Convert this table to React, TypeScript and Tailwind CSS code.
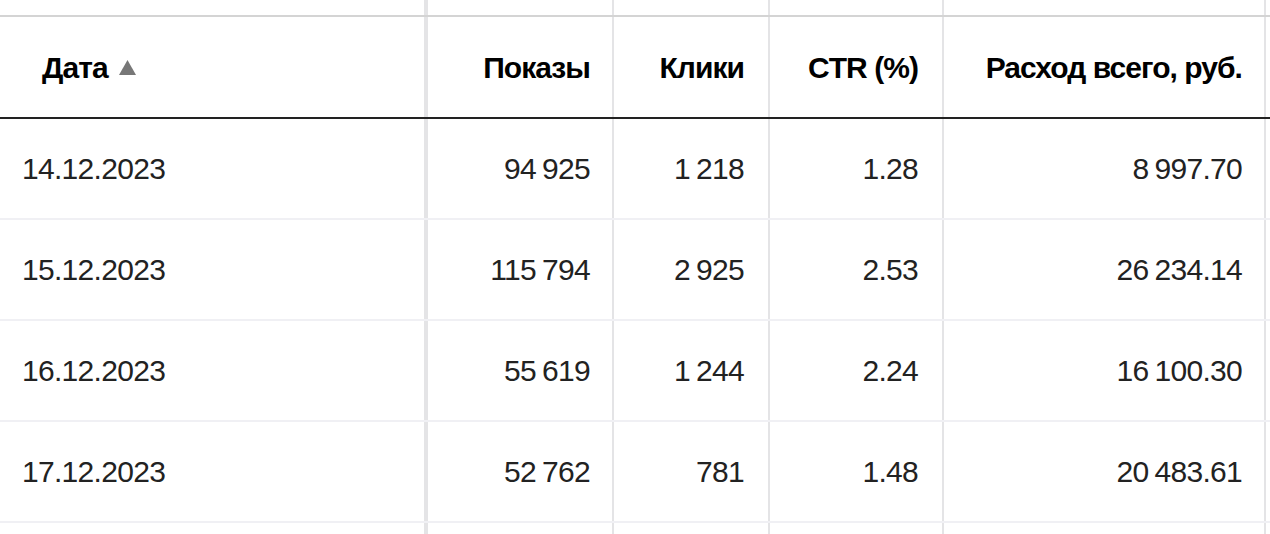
const rows = [
  { date: "14.12.2023", shows: "94 925", clicks: "1 218", ctr: "1.28", cost: "8 997.70" },
  { date: "15.12.2023", shows: "115 794", clicks: "2 925", ctr: "2.53", cost: "26 234.14" },
  { date: "16.12.2023", shows: "55 619", clicks: "1 244", ctr: "2.24", cost: "16 100.30" },
  { date: "17.12.2023", shows: "52 762", clicks: "781", ctr: "1.48", cost: "20 483.61" },
];

// group separator is narrower than a normal space
function Num({ value }: { value: string }) {
  const parts = value.split(" ");
  return (
    <span>
      {parts.map((p, i) => (
        <span key={i}>
          {i > 0 ? <span className="inline-block w-[6px]" /> : null}
          {p}
        </span>
      ))}
    </span>
  );
}

const cols = [
  "w-[428px] border-r-4 pl-[22px]",
  "w-[186px] border-r-2 pr-[22px]",
  "w-[156px] border-r-2 pr-[24px]",
  "w-[174px] border-r-2 pr-[24px]",
  "w-[322px] border-r-2 pr-[22px]",
];

function Cell({ i, children, right }: { i: number; children?: React.ReactNode; right?: boolean }) {
  return (
    <div
      className={`${cols[i]} shrink-0 border-[#e4e4e6] flex items-center ${
        right ? "justify-end" : ""
      }`}
    >
      {children}
    </div>
  );
}

export default function App() {
  return (
    <div
      className="w-[1270px] h-[534px] overflow-hidden bg-white text-[30px] tracking-[-0.7px] text-[#222]"
      style={{ fontFamily: '"Liberation Sans", Arial, sans-serif' }}
    >
      <div className="flex h-[15px]">
        {cols.map((_, i) => (
          <Cell key={i} i={i} />
        ))}
      </div>

      <div className="flex h-[104px] border-t-2 border-b-2 border-t-[#d4d4d4] border-b-[#222] font-bold text-black tracking-[-0.95px]">
        <Cell i={0}>
          <span className="pl-[20px] flex items-center gap-[11px]">
            Дата
            <svg width="17" height="15" viewBox="0 0 17 15">
              <path d="M8.5 0 L17 15 L0 15 Z" fill="#777" />
            </svg>
          </span>
        </Cell>
        <Cell i={1} right>Показы</Cell>
        <Cell i={2} right>Клики</Cell>
        <Cell i={3} right>CTR (%)</Cell>
        <Cell i={4} right>Расход всего, руб.</Cell>
      </div>

      {rows.map((r) => (
        <div key={r.date} className="flex h-[101px] border-b-2 border-[#f0f0f4]">
          <Cell i={0}>{r.date}</Cell>
          <Cell i={1} right><Num value={r.shows} /></Cell>
          <Cell i={2} right><Num value={r.clicks} /></Cell>
          <Cell i={3} right>{r.ctr}</Cell>
          <Cell i={4} right><Num value={r.cost} /></Cell>
        </div>
      ))}

      <div className="flex h-[40px]">
        {cols.map((_, i) => (
          <Cell key={i} i={i} />
        ))}
      </div>
    </div>
  );
}
